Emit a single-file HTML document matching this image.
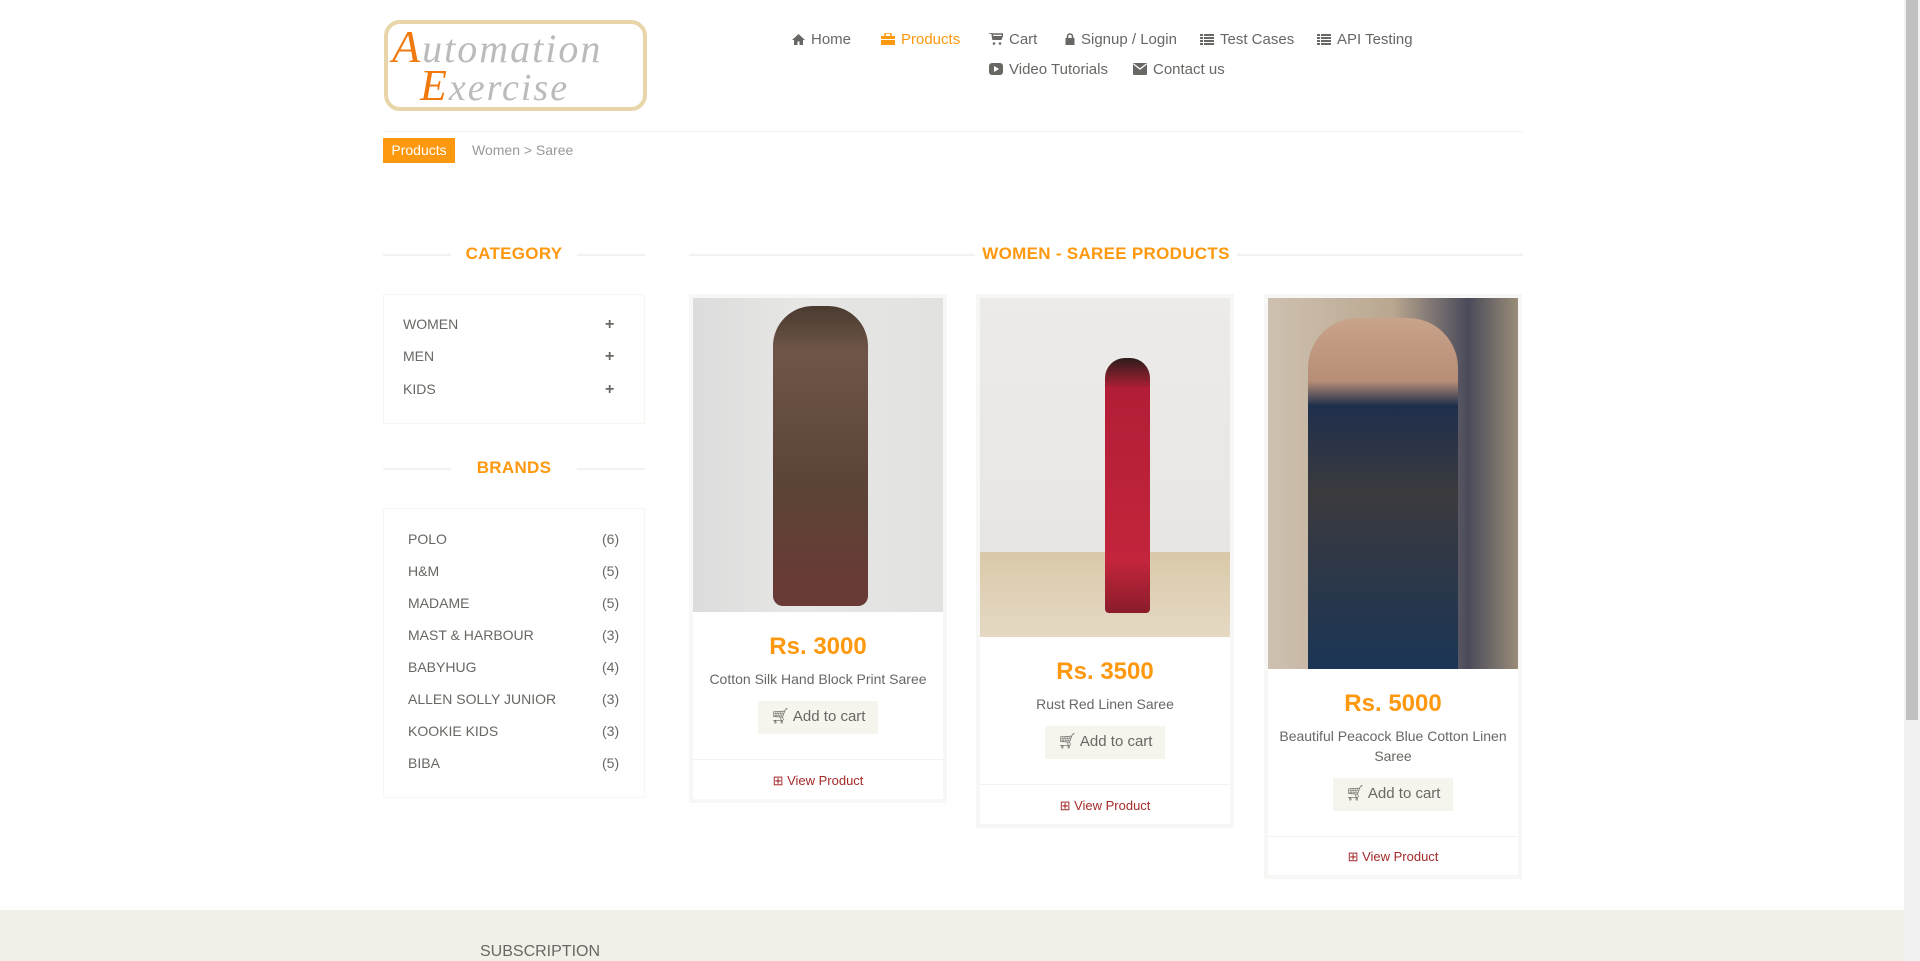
<!DOCTYPE html>
<html><head><meta charset="utf-8"><style>
*{box-sizing:border-box;margin:0;padding:0}
body{width:1920px;height:961px;overflow:hidden;background:#fff;font-family:"Liberation Sans",sans-serif;color:#696763;position:relative}
.a{position:absolute}
.nav{font-size:15px;color:#696763;white-space:nowrap}
.nav svg{vertical-align:-1px;margin-right:6px}
.hd{color:#FE980F;font-weight:bold;font-size:17px;text-align:center;letter-spacing:.3px}
.line{height:2px;background:#f2f2f2}
.box{border:1px solid #f7f7f0}
.it{font-size:14px;color:#696763}
.card{border:4px solid #f7f7f5;background:#fff}
.price{color:#FE980F;font-weight:bold;font-size:24px;text-align:center;width:100%;margin-top:21px}
.nm{font-size:14px;text-align:center;width:100%;color:#696763;margin-top:10px}
.btn{background:#F5F5ED;color:#696763;font-size:15px;text-align:center;line-height:32px;height:33px;margin:14px auto 0;width:120px}
.vp{color:#a52a2a;font-size:13px;text-align:center;width:100%;border-top:1px solid #f3f3ef;margin-top:25px;padding-top:13px}
.pl{font-weight:bold;font-size:16px}
</style></head><body>
<div class="a" style="left:384px;top:20px;width:263px;height:91px;border:4px solid #e8d5a9;border-radius:16px;background:#fff"></div>
<div class="a" style="left:392px;top:20px;font:italic 40px 'Liberation Serif',serif;color:#bbb;letter-spacing:2px"><span style="color:#f07a10;font-size:46px">A</span>utomation</div>
<div class="a" style="left:420px;top:60px;font:italic 38px 'Liberation Serif',serif;color:#bbb;letter-spacing:2px"><span style="color:#f07a10;font-size:44px">E</span>xercise</div>
<div class="a nav" style="left:792px;top:31px"><svg width="13" height="11" viewBox="0 0 13 11"><path d="M6.5 0L0 6h2v5h3.5V7.5h2V11H11V6h2z" fill="#696763"/></svg>Home</div>
<div class="a nav" style="left:881px;top:31px;color:#FE980F"><svg width="14" height="12" viewBox="0 0 14 12"><rect x="0" y="3" width="14" height="9" fill="#FE980F"/><rect x="4" y="0" width="6" height="4" fill="none" stroke="#FE980F" stroke-width="1.5"/><rect x="0" y="6" width="14" height="1" fill="#fff"/></svg>Products</div>
<div class="a nav" style="left:989px;top:31px"><svg width="14" height="12" viewBox="0 0 14 12"><path d="M0 0h3l1 6h8l2-5H4" fill="none" stroke="#696763" stroke-width="1.6"/><rect x="3.5" y="3" width="9" height="4" fill="#696763"/><circle cx="5" cy="10.5" r="1.3" fill="#696763"/><circle cx="11" cy="10.5" r="1.3" fill="#696763"/></svg>Cart</div>
<div class="a nav" style="left:1065px;top:31px"><svg width="10" height="12" viewBox="0 0 10 12"><path d="M2.5 5V3.5a2.5 2.5 0 015 0V5" fill="none" stroke="#696763" stroke-width="1.6"/><rect x="0.5" y="5" width="9" height="7" fill="#696763"/></svg>Signup / Login</div>
<div class="a nav" style="left:1200px;top:31px"><svg width="14" height="11" viewBox="0 0 14 11"><path d="M0 0h3v2H0zM4 0h10v2H4zM0 3h3v2H0zM4 3h10v2H4zM0 6h3v2H0zM4 6h10v2H4zM0 9h3v2H0zM4 9h10v2H4z" fill="#696763"/></svg>Test Cases</div>
<div class="a nav" style="left:1317px;top:31px"><svg width="14" height="11" viewBox="0 0 14 11"><path d="M0 0h3v2H0zM4 0h10v2H4zM0 3h3v2H0zM4 3h10v2H4zM0 6h3v2H0zM4 6h10v2H4zM0 9h3v2H0zM4 9h10v2H4z" fill="#696763"/></svg>API Testing</div>
<div class="a nav" style="left:989px;top:61px"><svg width="14" height="12" viewBox="0 0 14 12"><rect width="14" height="12" rx="3" fill="#696763"/><path d="M5 3l5 3-5 3z" fill="#fff"/></svg>Video Tutorials</div>
<div class="a nav" style="left:1133px;top:61px"><svg width="14" height="12" viewBox="0 0 14 12"><rect width="14" height="12" rx="1" fill="#696763"/><path d="M0.5 1l6.5 5 6.5-5" fill="none" stroke="#fff" stroke-width="1.3"/></svg>Contact us</div>
<div class="a" style="left:383px;top:131px;width:1140px;height:1px;background:#f0f0f0"></div>
<div class="a" style="left:383px;top:138px;width:72px;height:25px;background:#FE980F;color:#fff;font-size:14px;line-height:25px;text-align:center">Products</div>
<div class="a" style="left:472px;top:142px;font-size:14px;color:#999">Women &gt; Saree</div>
<div class="a line" style="left:383px;top:254px;width:68px"></div>
<div class="a line" style="left:577px;top:254px;width:68px"></div>
<div class="a hd" style="left:383px;top:244px;width:262px">CATEGORY</div>
<div class="a box" style="left:383px;top:294px;width:262px;height:130px"></div>
<div class="a it" style="left:403px;top:316px">WOMEN</div><div class="a pl" style="left:605px;top:316px">+</div>
<div class="a it" style="left:403px;top:348px">MEN</div><div class="a pl" style="left:605px;top:348px">+</div>
<div class="a it" style="left:403px;top:381px">KIDS</div><div class="a pl" style="left:605px;top:381px">+</div>
<div class="a line" style="left:383px;top:468px;width:68px"></div>
<div class="a line" style="left:577px;top:468px;width:68px"></div>
<div class="a hd" style="left:383px;top:458px;width:262px">BRANDS</div>
<div class="a box" style="left:383px;top:508px;width:262px;height:290px"></div>
<div class="a it" style="left:408px;top:523px;line-height:32px">POLO<br>H&amp;M<br>MADAME<br>MAST &amp; HARBOUR<br>BABYHUG<br>ALLEN SOLLY JUNIOR<br>KOOKIE KIDS<br>BIBA</div>
<div class="a it" style="left:602px;top:523px;line-height:32px">(6)<br>(5)<br>(5)<br>(3)<br>(4)<br>(3)<br>(3)<br>(5)</div>
<div class="a line" style="left:689px;top:254px;width:834px"></div>
<div class="a hd" style="left:975px;top:244px;width:262px;background:#fff">WOMEN - SAREE PRODUCTS</div>
<div class="a card" style="left:689px;top:294px;width:258px;height:509px">
 <div style="height:314px;padding-top:8px;background:linear-gradient(90deg,#dcdcdc,#e6e6e4 40%,#e2e2e0)"><div style="margin-left:80px;width:95px;height:300px;background:linear-gradient(180deg,#4a3a30 0,#6e5548 15%,#5b4436 60%,#6a3a36 95%);border-radius:40px 40px 10px 10px"></div></div>
 <div class="price">Rs. 3000</div>
 <div class="nm">Cotton Silk Hand Block Print Saree</div>
 <div class="btn">🛒︎ Add to cart</div>
 <div class="vp">⊞ View Product</div>
</div>
<div class="a card" style="left:976px;top:294px;width:258px;height:534px">
 <div style="height:339px;padding-top:60px;background:linear-gradient(180deg,#ecebe9 0,#e8e6e3 75%,#d9c9a9 75%,#e6d9c4)"><div style="margin-left:125px;width:45px;height:255px;background:linear-gradient(180deg,#2b1d1a 0,#b21e36 12%,#c2253c 80%,#8a1c2a);border-radius:20px 20px 4px 4px"></div></div>
 <div class="price">Rs. 3500</div>
 <div class="nm">Rust Red Linen Saree</div>
 <div class="btn">🛒︎ Add to cart</div>
 <div class="vp">⊞ View Product</div>
</div>
<div class="a card" style="left:1264px;top:294px;width:258px;height:585px">
 <div style="height:371px;padding-top:20px;background:linear-gradient(90deg,#cfc1b0,#b9a790 50%,#4a4a5a 80%,#9a8d78)"><div style="margin-left:40px;width:150px;height:351px;background:linear-gradient(180deg,#c9a38a 0,#b78d76 18%,#1e2f4c 25%,#3b3a3e 50%,#1b3555 100%);border-radius:50px 50px 0 0"></div></div>
 <div class="price">Rs. 5000</div>
 <div class="nm" style="line-height:20px;margin-top:8px">Beautiful Peacock Blue Cotton Linen<br>Saree</div>
 <div class="btn" style="margin-top:12px">🛒︎ Add to cart</div>
 <div class="vp" style="padding-top:12px">⊞ View Product</div>
</div>
<div class="a" style="left:0;top:910px;width:1904px;height:51px;background:#f0f0e9"></div>
<div class="a" style="left:480px;top:943px;font-size:16px;color:#696763">SUBSCRIPTION</div>
<div class="a" style="left:1904px;top:0;width:16px;height:961px;background:#f1f1f1"></div>
<div class="a" style="left:1906px;top:0;width:12px;height:720px;background:#c1c1c1"></div>
</body></html>
